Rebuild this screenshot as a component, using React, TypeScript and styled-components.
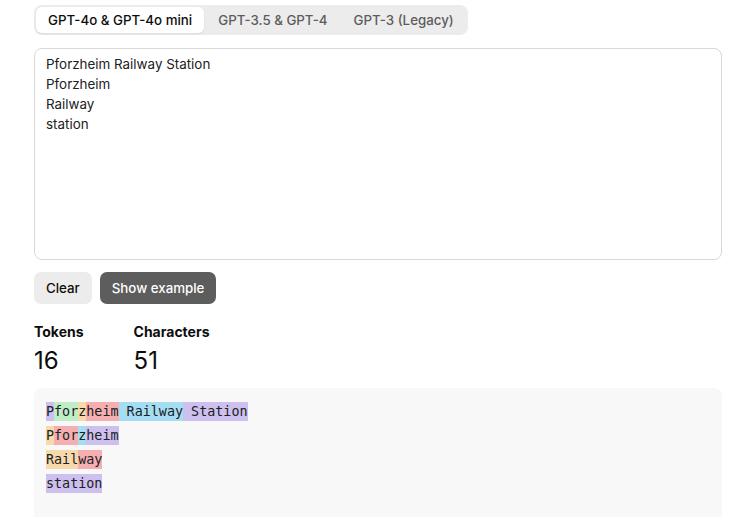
import React from "react";
import styled, { createGlobalStyle } from "styled-components";

const Global = createGlobalStyle`
  html, body { margin: 0; padding: 0; background: #ffffff; }
  body { font-family: Inter, "Noto Sans", "Liberation Sans", sans-serif; color: #0d0d0d; }
  * { box-sizing: border-box; }
`;

const Page = styled.div`
  width: 729px;
  height: 517px;
  overflow: hidden;
  padding: 5px 7px 0 34px;
  display: flex;
  flex-direction: column;
`;

const Tabs = styled.div`
  align-self: flex-start;
  display: flex;
  gap: 2px;
  padding: 2px;
  background: #ececec;
  border-radius: 8px;
`;

const Tab = styled.button<{ $active?: boolean }>`
  border: none;
  font-family: inherit;
  font-size: 13.3px;
  font-weight: 500;
  height: 26px;
  padding: 0 12px;
  border-radius: 6px;
  cursor: pointer;
  background: ${(p) => (p.$active ? "#ffffff" : "transparent")};
  color: ${(p) => (p.$active ? "#0d0d0d" : "#5d5d5d")};
  box-shadow: ${(p) => (p.$active ? "0 1px 2px rgba(0,0,0,0.08)" : "none")};
`;

const Input = styled.textarea`
  margin-top: 13px;
  width: 688px;
  height: 212px;
  resize: none;
  border: 1px solid #d9d9d9;
  border-radius: 8px;
  padding: 5px 11px;
  font-family: inherit;
  font-size: 13.4px;
  line-height: 20px;
  color: #202123;
  background: #fff;
  outline: none;
`;

const Buttons = styled.div`
  display: flex;
  gap: 8px;
  margin-top: 12px;
`;

const Btn = styled.button<{ $dark?: boolean }>`
  border: none;
  height: 32px;
  padding: 0 12px;
  border-radius: 7px;
  font-family: inherit;
  font-size: 13.3px;
  font-weight: 500;
  background: ${(p) => (p.$dark ? "#5d5d5d" : "#ececec")};
  color: ${(p) => (p.$dark ? "#ffffff" : "#0d0d0d")};
`;

const Stats = styled.div`
  display: flex;
  gap: 50px;
  margin-top: 17px;
`;

const Stat = styled.div`
  display: flex;
  flex-direction: column;
`;

const StatLabel = styled.div`
  font-size: 14px;
  font-weight: 700;
  line-height: 22px;
`;

const StatValue = styled.div`
  font-size: 24px;
  font-weight: 400;
  line-height: 36px;
`;

const Output = styled.div`
  margin-top: 9px;
  width: 688px;
  flex: 1;
  background: #f8f8f8;
  border-radius: 8px 8px 0 0;
  padding: 12px 12px;
  font-family: "DejaVu Sans Mono", "Liberation Mono", monospace;
  font-size: 13.4px;
  line-height: 24px;
  color: #202123;
  white-space: pre;
`;

const Tok = styled.span<{ $c: number }>`
  background: ${(p) =>
    [
      "rgba(107,64,216,0.3)",
      "rgba(104,222,122,0.4)",
      "rgba(244,172,54,0.4)",
      "rgba(239,65,70,0.4)",
      "rgba(39,181,234,0.4)",
    ][p.$c]};
  padding: 2px 0;
`;

const lines: [string, number][][] = [
  [["P", 0], ["for", 1], ["z", 2], ["heim", 3], [" Railway", 4], [" Station", 0]],
  [["P", 2], ["for", 3], ["z", 4], ["heim", 0]],
  [["Rail", 2], ["way", 3]],
  [["station", 0]],
];

export default function App() {
  return (
    <>
      <Global />
      <Page>
        <Tabs>
          <Tab $active>GPT-4o &amp; GPT-4o mini</Tab>
          <Tab>GPT-3.5 &amp; GPT-4</Tab>
          <Tab>GPT-3 (Legacy)</Tab>
        </Tabs>
        <Input
          readOnly
          value={"Pforzheim Railway Station\nPforzheim\nRailway\nstation"}
        />
        <Buttons>
          <Btn>Clear</Btn>
          <Btn $dark>Show example</Btn>
        </Buttons>
        <Stats>
          <Stat>
            <StatLabel>Tokens</StatLabel>
            <StatValue>16</StatValue>
          </Stat>
          <Stat>
            <StatLabel>Characters</StatLabel>
            <StatValue>51</StatValue>
          </Stat>
        </Stats>
        <Output>
          {lines.map((line, i) => (
            <div key={i}>
              {line.map(([t, c], j) => (
                <Tok key={j} $c={c}>
                  {t}
                </Tok>
              ))}
            </div>
          ))}
        </Output>
      </Page>
    </>
  );
}
